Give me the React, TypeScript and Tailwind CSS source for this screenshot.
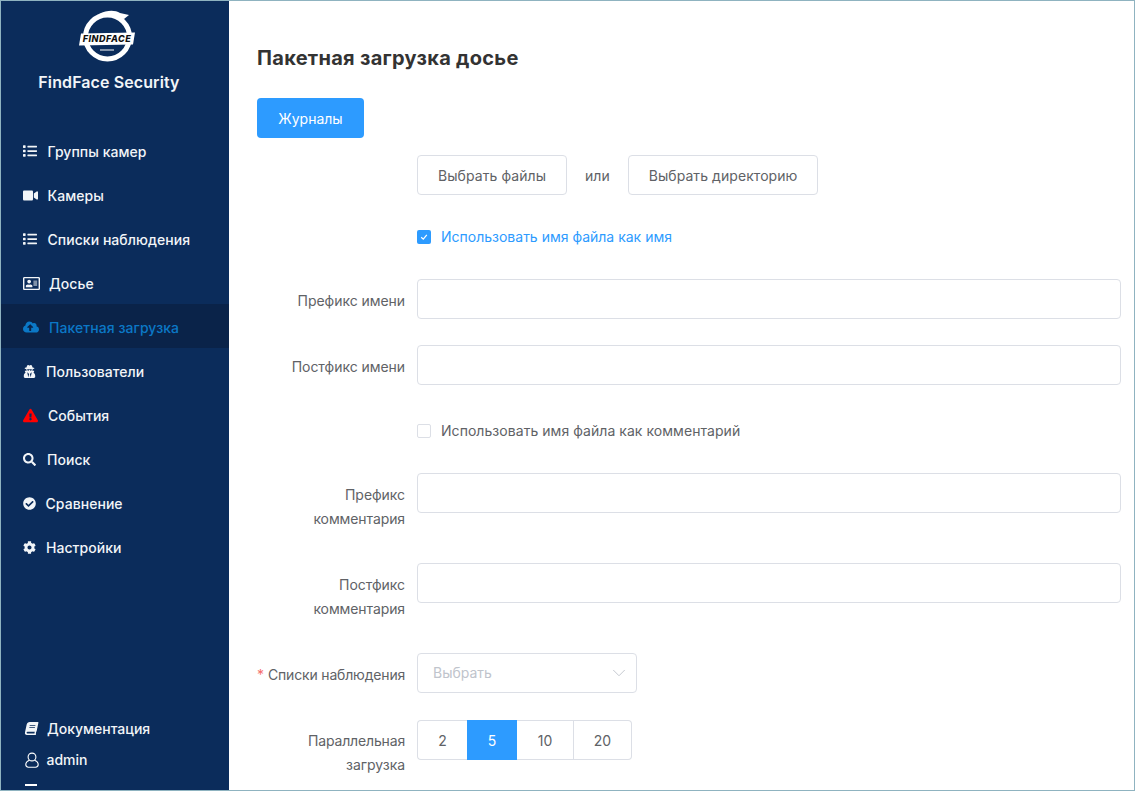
import React from 'react';
import {
  FaBook,
  FaCheckCircle,
  FaCloudUploadAlt,
  FaCog,
  FaExclamationTriangle,
  FaList,
  FaRegAddressCard,
  FaSearch,
  FaUserSecret,
  FaVideo,
} from 'react-icons/fa';
import { ChevronDown } from 'lucide-react';

const NAV_ITEMS = [
  { label: 'Группы камер', icon: <FaList size={14} />, gap: 'w-[24.5px]' },
  { label: 'Камеры', icon: <FaVideo size={15} />, gap: 'w-[24.5px]' },
  { label: 'Списки наблюдения', icon: <FaList size={14} />, gap: 'w-[24.5px]' },
  { label: 'Досье', icon: <FaRegAddressCard size={17} />, gap: 'w-[26px]' },
  { label: 'Пакетная загрузка', icon: <FaCloudUploadAlt size={16} />, gap: 'w-[26px]', active: true },
  { label: 'Пользователи', icon: <FaUserSecret size={13} />, gap: 'w-[23px]' },
  { label: 'События', icon: <FaExclamationTriangle size={15} className="text-[#f00]" />, gap: 'w-[25px]' },
  { label: 'Поиск', icon: <FaSearch size={13} />, gap: 'w-[24px]' },
  { label: 'Сравнение', icon: <FaCheckCircle size={13} />, gap: 'w-[22.5px]' },
  { label: 'Настройки', icon: <FaCog size={13} />, gap: 'w-[23px]' },
];

const Logo = () => (
  <svg width="58" height="54" viewBox="0 0 58 54" className="block mr-[2px]">
    <circle cx="28.5" cy="27" r="22" fill="none" stroke="#fff" strokeWidth="5" />
    <path d="M20 4 C28 0 36 0 41 3 L50 5 L45 9 L39 8 C33 5 27 4 20 4 Z" fill="#fff" />
    <path d="M2 23.5 L56 22.5 L54 34.5 L0 35.5 Z" fill="#fff" />
    <text
      x="28"
      y="32"
      textAnchor="middle"
      fontFamily="Inter, sans-serif"
      fontSize="9"
      fontWeight="800"
      fontStyle="italic"
      letterSpacing="0.5"
      fill="#111"
    >
      FINDFACE
    </text>
    <rect x="21" y="39.5" width="14" height="1" fill="#fff" />
  </svg>
);

const UserOutline = () => (
  <svg width="14" height="16" viewBox="0 0 14 16" fill="none" stroke="#fff" strokeWidth="1.1">
    <circle cx="7" cy="5" r="3.9" />
    <path d="M4.5 8.2 C2 9 .8 10.6 .8 12.6 C.8 14.2 2 15.2 3.4 15.2 H10.6 C12 15.2 13.2 14.2 13.2 12.6 C13.2 10.6 12 9 9.5 8.2" />
  </svg>
);

const Sidebar = () => (
  <aside className="w-[228px] h-full shrink-0 bg-[#0b2c5b] overflow-hidden flex flex-col">
    <div className="flex flex-col items-center pt-[9px] pr-[12px] h-[127px] shrink-0">
      <Logo />
      <div className="mt-[6px] text-[16px] leading-[24px] font-semibold tracking-[0.1px] text-[#f2f5f8]">
        FindFace Security
      </div>
    </div>
    <nav>
      {NAV_ITEMS.map((item) => (
        <div
          key={item.label}
          className={`h-[44px] flex items-center pl-[22px] pt-[2px] text-[14px] font-medium tracking-[0.05px] ${
            item.active ? 'bg-[#0a2349] text-[#0b78c6]' : 'text-[#f2f5f8]'
          }`}
        >
          <span className={`${item.gap} flex items-center`}>{item.icon}</span>
          {item.label}
        </div>
      ))}
    </nav>
    <div className="mt-[145px] pl-[24px] text-[14px] font-medium text-[#f2f5f8]">
      <div className="h-[31px] flex items-center">
        <span className="w-[22px] flex items-center">
          <FaBook size={13} className="-skew-x-12" />
        </span>
        Документация
      </div>
      <div className="h-[31px] flex items-center">
        <span className="w-[21.5px] flex items-center">
          <UserOutline />
        </span>
        admin
      </div>
      <div className="mt-[9px] w-[12px] h-[2px] bg-white" />
    </div>
  </aside>
);

const FormRow = ({
  label,
  className = '',
  children,
}: {
  label?: React.ReactNode;
  className?: string;
  children: React.ReactNode;
}) => (
  <div className={`flex ${className}`}>
    <div className="w-[160px] shrink-0 pr-[12px] pt-[10px] text-right text-[14px] leading-[24px] whitespace-nowrap tracking-[-0.05px] text-[#606266]">
      {label}
    </div>
    <div className="flex-1 min-w-0">{children}</div>
  </div>
);

const TextInput = () => <div className="h-[40px] rounded-[4px] border border-[#dcdfe6] bg-white" />;

const OutlineButton = ({ children }: { children: React.ReactNode }) => (
  <button className="h-[40px] rounded-[4px] border border-[#dcdfe6] bg-white px-[20px] text-[14px] tracking-[0.07px] text-[#606266]">
    {children}
  </button>
);

const PARALLEL = ['2', '5', '10', '20'];

const App: React.FC = () => {
  return (
    <div className="w-[1135px] h-[791px] overflow-hidden border border-[#8fb3c0] flex bg-white font-['Inter',sans-serif]">
      <Sidebar />
      <main className="flex-1 min-w-0 pl-[28px] pr-[13px]">
        <h1 className="mt-[45px] text-[20px] leading-[24px] font-bold tracking-[0.29px] text-[#333]">
          Пакетная загрузка досье
        </h1>
        <button className="mt-[28px] block h-[40px] w-[107px] rounded-[4px] bg-[#2d9bff] text-[14px] text-white">
          Журналы
        </button>

        <FormRow className="mt-[17px]">
          <div className="flex items-center">
            <OutlineButton>Выбрать файлы</OutlineButton>
            <span className="mx-[18px] text-[14px] text-[#606266]">или</span>
            <OutlineButton>Выбрать директорию</OutlineButton>
          </div>
        </FormRow>

        <FormRow className="mt-[22px]">
          <label className="h-[40px] flex items-center text-[14px] text-[#2d9bff]">
            <span className="w-[14px] h-[14px] mr-[10px] rounded-[2px] bg-[#2d9bff] flex items-center justify-center">
              <svg width="10" height="10" viewBox="0 0 10 10" fill="none" stroke="#fff" strokeWidth="1.2">
                <path d="M2.2 5.2 L4.3 7.2 L7.8 2.8" />
              </svg>
            </span>
            <span className="mb-[2px]">Использовать имя файла как имя</span>
          </label>
        </FormRow>

        <FormRow label="Префикс имени" className="mt-[22px]">
          <TextInput />
        </FormRow>
        <FormRow label="Постфикс имени" className="mt-[26px]">
          <TextInput />
        </FormRow>

        <FormRow className="mt-[26px]">
          <label className="h-[40px] flex items-center text-[14px] text-[#606266]">
            <span className="w-[14px] h-[14px] mr-[10px] rounded-[2px] border border-[#dcdfe6] bg-white" />
            <span className="mb-[2px] tracking-[0.05px]">Использовать имя файла как комментарий</span>
          </label>
        </FormRow>

        <FormRow
          label={
            <>
              Префикс
              <br />
              <span className="tracking-[-0.1px]">комментария</span>
            </>
          }
          className="mt-[22px]"
        >
          <TextInput />
        </FormRow>
        <FormRow
          label={
            <>
              Постфикс
              <br />
              <span className="tracking-[-0.1px]">комментария</span>
            </>
          }
          className="mt-[32px]"
        >
          <TextInput />
        </FormRow>

        <FormRow
          label={
            <>
              <span className="text-[#f56c6c] mr-[4px]">*</span>
              <span className="tracking-[-0.17px]">Списки наблюдения</span>
            </>
          }
          className="mt-[32px]"
        >
          <div className="w-[220px] h-[40px] rounded-[4px] border border-[#dcdfe6] bg-white flex items-center justify-between pl-[15px] pr-[6px] text-[14px] text-[#c0c4cc]">
            <span className="mb-[2px]">Выбрать</span>
            <ChevronDown size={22} strokeWidth={1} className="text-[#c0c4cc]" />
          </div>
        </FormRow>

        <FormRow
          label={
            <div className="-mt-[1px]">
              <span className="tracking-[-0.15px]">Параллельная</span>
              <br />
              загрузка
            </div>
          }
          className="mt-[27px]"
        >
          <div className="flex h-[40px] text-[14px] text-[#606266]">
            {PARALLEL.map((value, i) => (
              <div
                key={value}
                className={`flex items-center justify-center ${
                  value === '5'
                    ? 'w-[50px] bg-[#2d9bff] text-white'
                    : `border-y border-[#dcdfe6] ${
                        i === 0
                          ? 'w-[50px] border-l rounded-l-[4px]'
                          : i === 2
                            ? 'w-[57px] border-r'
                            : 'w-[58px] border-r rounded-r-[4px]'
                      }`
                }`}
              >
                {value}
              </div>
            ))}
          </div>
        </FormRow>
      </main>
    </div>
  );
};

export default App;
